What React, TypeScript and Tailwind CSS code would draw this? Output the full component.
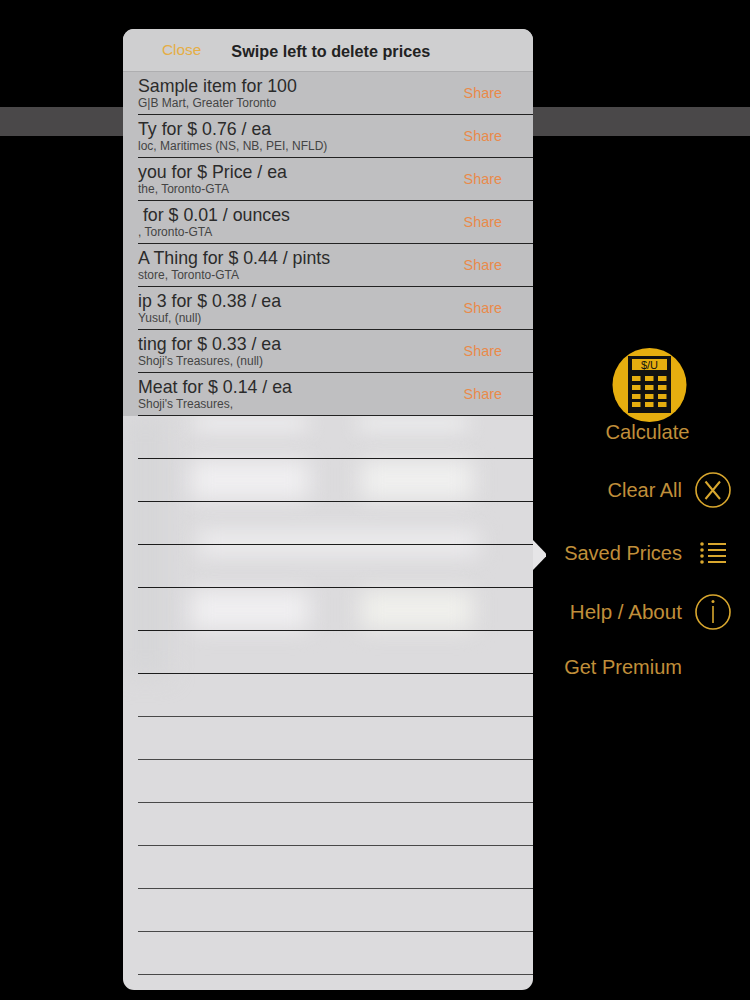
import React from "react";

const rows = [
  ["Sample item for 100", "G|B Mart, Greater Toronto"],
  ["Ty for $ 0.76 / ea", "loc, Maritimes (NS, NB, PEI, NFLD)"],
  ["you for $ Price / ea", "the, Toronto-GTA"],
  ["\u00a0for $ 0.01 / ounces", ", Toronto-GTA"],
  ["A Thing for $ 0.44 / pints", "store, Toronto-GTA"],
  ["ip 3 for $ 0.38 / ea", "Yusuf, (null)"],
  ["ting for $ 0.33 / ea", "Shoji's Treasures, (null)"],
  ["Meat for $ 0.14 / ea", "Shoji's Treasures,"],
];

function Calc() {
  return (
    <svg width="75" height="76" viewBox="0 0 75 76">
      <circle cx="37.5" cy="38" r="37" fill="#e6ae0f" />
      <rect x="16" y="9" width="43" height="57" fill="#111" />
      <rect x="20" y="12" width="35" height="11" fill="#e6ae0f" />
      <text x="37.5" y="21.5" textAnchor="middle" fontSize="11" fontFamily="Liberation Sans" fill="#111">$/U</text>
      {[29, 38, 47, 55].map((y) =>
        [20, 33, 46].map((x) => <rect key={`${x}-${y}`} x={x} y={y} width="8.5" height="5" fill="#e6ae0f" />)
      )}
    </svg>
  );
}

function MenuRow({ label, wide, children }: { label: string; wide?: boolean; children?: React.ReactNode }) {
  return (
    <div className="flex items-center h-9">
      <span
        className={
          wide
            ? "w-[149px] text-right text-[20.6px] leading-6 text-[#c08f3a]"
            : "w-[149px] text-right text-[20px] leading-6 text-[#c08f3a]"
        }
      >
        {label}
      </span>
      <span className="w-[62px] flex justify-center">{children}</span>
    </div>
  );
}

export default function App() {
  return (
    <div className="relative w-[750px] h-[1000px] bg-black overflow-hidden font-['Liberation_Sans',Arial,sans-serif]">
      <div className="absolute left-0 right-0 top-[107px] h-[29px] bg-[#4a4849]" />
      <div className="relative flex pt-[29px] pl-[123px]">
        <div className="relative w-[410px] h-[961px] rounded-[11px] overflow-hidden bg-[#dcdbdd]">
          <div className="absolute left-0 top-[387px] w-[45px] h-[260px] bg-[#d6d6d8] blur-[12px]" />
          <div className="absolute left-[70px] top-[386px] w-[115px] h-[16px] bg-[#efeef0] blur-[10px]" />
          <div className="absolute left-[235px] top-[386px] w-[110px] h-[16px] bg-[#eeeeef] blur-[10px]" />
          <div className="absolute left-[68px] top-[432px] w-[118px] h-[38px] bg-[#f0eff1] blur-[11px]" />
          <div className="absolute left-[238px] top-[432px] w-[112px] h-[38px] bg-[#f0f0ef] blur-[11px]" />
          <div className="absolute left-[75px] top-[502px] w-[280px] h-[24px] bg-[#eeedef] blur-[11px]" />
          <div className="absolute left-[68px] top-[562px] w-[118px] h-[38px] bg-[#f0eff1] blur-[11px]" />
          <div className="absolute left-[238px] top-[562px] w-[112px] h-[38px] bg-[#f0f0ec] blur-[11px]" />
          <div className="relative flex items-center h-[43px] bg-[#cfcfd0] border-b border-[#aeaeb0]">
            <span className="ml-[39px] text-[15.4px] text-[#e5ae45]">Close</span>
            <span className="ml-[30px] pt-[2px] text-[16.2px] font-bold text-[#222]">Swipe left to delete prices</span>
          </div>
          <div className="relative bg-[#bfbfc1]">
            {rows.map(([a, b], i) => (
              <div key={i} className="flex items-center justify-between h-[43px] ml-[15px] border-b border-[#222] relative">
                <div className="flex flex-col -mt-px">
                  <span className="text-[17.75px] leading-[21px] text-[#2b2b2b] whitespace-pre">{a}</span>
                  <span className="text-[12px] leading-[13px] text-[#444]">{b}</span>
                </div>
                <span className="mr-[31px] pt-[2px] text-[14.4px] text-[#e98a4a]">Share</span>
              </div>
            ))}
          </div>
          <div className="relative">
            {Array.from({ length: 13 }).map((_, i) => (
              <div
                key={i}
                className={i < 6 ? "h-[43px] ml-[15px] border-b border-[#1c1c1c]" : "h-[43px] ml-[15px] border-b border-[#484848]"}
              />
            ))}
          </div>
        </div>
        <div className="relative w-[217px] flex flex-col pt-[318px] text-[#c08f3a]">
          <div
            className="absolute left-0 top-[511px] w-[13px] h-[30px] bg-[#e6e5e7]"
            style={{ clipPath: "polygon(0 0, 100% 45%, 100% 55%, 0 100%)" }}
          />
          <div className="flex flex-col items-center ml-[1px] w-[230px]">
            <Calc />
            <span className="mr-[3px] text-[20.2px] leading-6 text-[#c08f3a] -mt-[3px]">Calculate</span>
          </div>
          <div className="mt-[28px]">
            <MenuRow label="Clear All">
              <svg width="36" height="36" viewBox="0 0 36 36" fill="none" stroke="#d9a72e" strokeWidth="1.6">
                <circle cx="18" cy="18" r="17" />
                <path d="M10.5 9.5 L25 27 M25 9.5 L10.5 27" strokeWidth="2" />
              </svg>
            </MenuRow>
          </div>
          <div className="mt-[27px]">
            <MenuRow label="Saved Prices">
              <svg width="26" height="22" viewBox="0 0 26 22" fill="#d9a72e">
                <circle cx="2" cy="2" r="1.8" />
                <circle cx="2" cy="8" r="1.8" />
                <circle cx="2" cy="14" r="1.8" />
                <circle cx="2" cy="20" r="1.8" />
                <rect x="8" y="1" width="18" height="2" />
                <rect x="8" y="7" width="18" height="2" />
                <rect x="8" y="13" width="18" height="2" />
                <rect x="8" y="19" width="18" height="2" />
              </svg>
            </MenuRow>
          </div>
          <div className="mt-[23px]">
            <MenuRow label="Help / About" wide>
              <svg width="36" height="36" viewBox="0 0 36 36" fill="none" stroke="#d9a72e" strokeWidth="1.6">
                <circle cx="18" cy="18" r="17" />
                <path d="M18 12 V29" />
                <circle cx="18" cy="7.5" r="1.5" fill="#d9a72e" stroke="none" />
              </svg>
            </MenuRow>
          </div>
          <div className="mt-[19px]">
            <MenuRow label="Get Premium" />
          </div>
        </div>
      </div>
    </div>
  );
}
